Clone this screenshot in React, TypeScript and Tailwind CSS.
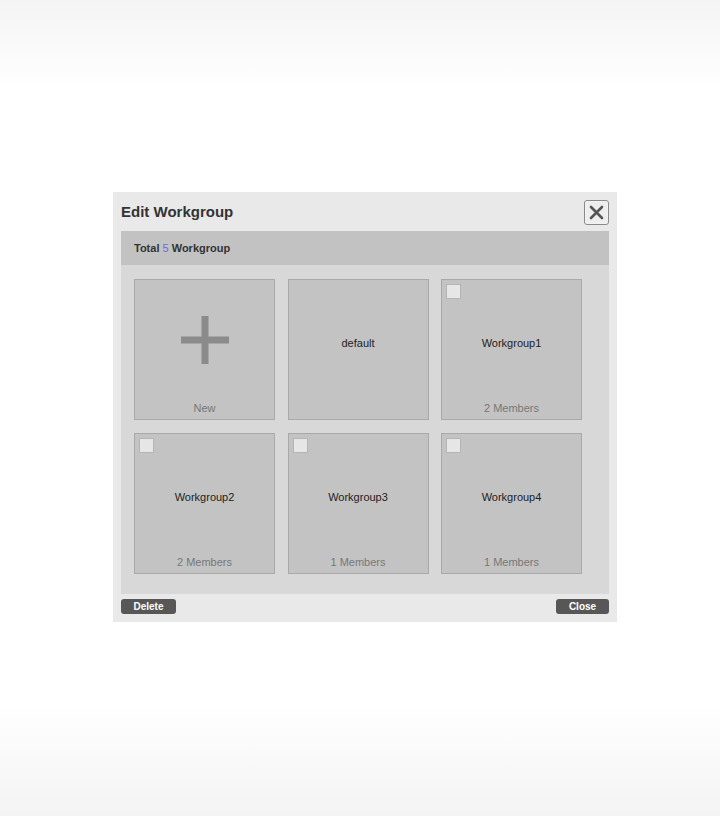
import React from "react";

type Card = { name: string; members?: string; check?: boolean; isNew?: boolean };

const cards: Card[] = [
  { name: "New", isNew: true },
  { name: "default" },
  { name: "Workgroup1", members: "2 Members", check: true },
  { name: "Workgroup2", members: "2 Members", check: true },
  { name: "Workgroup3", members: "1 Members", check: true },
  { name: "Workgroup4", members: "1 Members", check: true },
];

function Tile({ c }: { c: Card }) {
  return (
    <div className="relative w-[141px] h-[141px] bg-[#c3c3c3] border border-[#a9a9a9] flex flex-col items-center">
      {c.check && (
        <div className="absolute left-[4px] top-[4px] w-[15px] h-[15px] bg-[#e6e6e6] border border-[#b5b5b5]" />
      )}
      {c.isNew ? (
        <div className="mt-[36px] h-[48px] flex items-center justify-center">
          <svg width="48" height="48" viewBox="0 0 48 48">
            <rect x="20.5" y="0" width="7" height="48" fill="#8b8b8b" />
            <rect x="0" y="20.5" width="48" height="7" fill="#8b8b8b" />
          </svg>
        </div>
      ) : (
        <div className="mt-[57px] h-[12px] text-[11px] text-[#222] leading-[12px]">{c.name}</div>
      )}
      <div className="flex-1" />
      <div className="mb-[5px] h-[12px] text-[11px] text-[#777] leading-[12px]">
        {c.isNew ? "New" : c.members ?? ""}
      </div>
    </div>
  );
}

export default function App() {
  return (
    <div
      className="w-[720px] h-[816px] flex flex-col items-start bg-[linear-gradient(to_bottom,#f4f4f4_0px,#ffffff_90px,#ffffff_700px,#f4f4f4_816px)]"
      style={{ fontFamily: '"Liberation Sans", Arial, sans-serif' }}
    >
      <div className="mt-[192px] ml-[113px] w-[504px] h-[430px] bg-[#e9e9e9] flex flex-col px-[8px]">
        <div className="h-[39px] flex items-center justify-between">
          <div className="text-[15px] font-bold text-[#333] pt-[2px]">Edit Workgroup</div>
          <div className="w-[25px] h-[25px] mt-[1px] border border-[#8a8a8a] rounded-[3px] bg-[#eeeeee] flex items-center justify-center shadow-[inset_0_0_2px_#ffffff]">
            <svg width="15" height="15" viewBox="0 0 15 15">
              <path d="M2 2 L13 13 M13 2 L2 13" stroke="#555" strokeWidth="2.6" strokeLinecap="round" />
            </svg>
          </div>
        </div>
        <div className="h-[34px] bg-[#c3c2c2] flex items-center pl-[13px] text-[11px] font-bold text-[#333]">
          Total&nbsp;<span className="text-[#6a6ae0] font-normal">5</span>&nbsp;Workgroup
        </div>
        <div className="h-[329px] bg-[#d8d8d8] pl-[13px] pt-[14px]">
          <div className="grid grid-cols-[141px_141px_141px] gap-x-[12.5px] gap-y-[13px]">
            {cards.map((c) => (
              <Tile key={c.name} c={c} />
            ))}
          </div>
        </div>
        <div className="flex-1 flex items-start justify-between pt-[5px]">
          <button className="w-[55px] h-[15px] rounded-[3px] bg-[#575757] text-white text-[10px] font-bold leading-none flex items-center justify-center">
            Delete
          </button>
          <button className="w-[53px] h-[15px] rounded-[3px] bg-[#575757] text-white text-[10px] font-bold leading-none flex items-center justify-center">
            Close
          </button>
        </div>
      </div>
    </div>
  );
}
